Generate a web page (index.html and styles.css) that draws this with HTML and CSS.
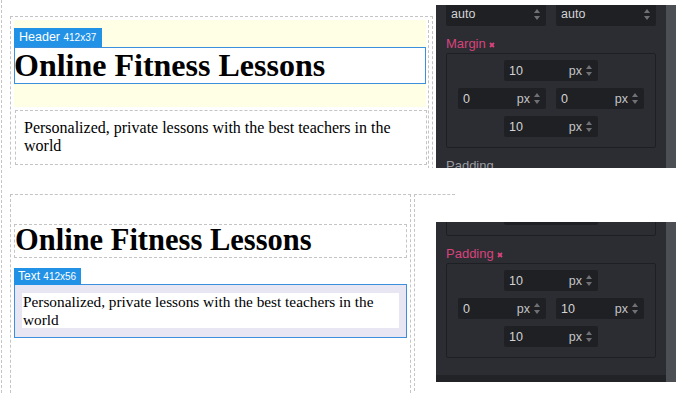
FILE: index.html
```html
<!DOCTYPE html>
<html>
<head>
    <meta charset="UTF-8">
    <meta name="viewport" content="width=device-width, initial-scale=1.0">
    <title>Box model editor</title>
    <link rel="stylesheet" href="styles.css">
</head>
<body>
    <div class="page">
        <div class="shot shot-top">
            <div class="canvas">
                <div class="frame">
                    <div class="frame-body">
                        <div class="hero">
                            <h1 class="title selected">
                                <span class="badge">Header <small>412x37</small></span>
                                Online Fitness Lessons
                            </h1>
                        </div>
                        <div class="text-box">
                            <p>Personalized, private lessons with the best teachers in the world</p>
                        </div>
                    </div>
                </div>
            </div>
            <div class="panel">
                <div class="panel-body">
                    <div class="panel-scroll">
                        <div class="selects">
                            <div class="field"><span class="val">auto</span><span class="spin"></span></div>
                            <div class="field"><span class="val">auto</span><span class="spin"></span></div>
                        </div>
                        <div class="prop-label">Margin <svg class="clear" width="6" height="6" viewBox="0 0 6 6"><path d="M1 1L5 5M5 1L1 5"/></svg></div>
                        <div class="box-model">
                            <div class="field num"><span class="val">10</span><span class="unit">px</span><span class="spin"></span></div>
                            <div class="pair">
                                <div class="field num"><span class="val">0</span><span class="unit">px</span><span class="spin"></span></div>
                                <div class="field num"><span class="val">0</span><span class="unit">px</span><span class="spin"></span></div>
                            </div>
                            <div class="field num"><span class="val">10</span><span class="unit">px</span><span class="spin"></span></div>
                        </div>
                        <div class="prop-label plain">Padding</div>
                    </div>
                </div>
                <div class="panel-strip"></div>
            </div>
        </div>

        <div class="shot shot-bottom">
            <div class="canvas">
                <div class="frame small">
                    <h1 class="title-sm">Online Fitness Lessons</h1>
                    <div class="text-sel">
                        <span class="badge">Text <small>412x56</small></span>
                        <p>Personalized, private lessons with the best teachers in the world</p>
                    </div>
                </div>
                <div class="side-col"></div>
            </div>
            <div class="panel panel-low">
                <div class="panel-body">
                    <div class="panel-scroll scrolled">
                        <div class="box-model">
                            <div class="field num"><span class="val">10</span><span class="unit">px</span><span class="spin"></span></div>
                            <div class="pair">
                                <div class="field num"><span class="val">0</span><span class="unit">px</span><span class="spin"></span></div>
                                <div class="field num"><span class="val">0</span><span class="unit">px</span><span class="spin"></span></div>
                            </div>
                            <div class="field num"><span class="val">10</span><span class="unit">px</span><span class="spin"></span></div>
                        </div>
                        <div class="prop-label">Padding <svg class="clear" width="6" height="6" viewBox="0 0 6 6"><path d="M1 1L5 5M5 1L1 5"/></svg></div>
                        <div class="box-model">
                            <div class="field num"><span class="val">10</span><span class="unit">px</span><span class="spin"></span></div>
                            <div class="pair">
                                <div class="field num"><span class="val">0</span><span class="unit">px</span><span class="spin"></span></div>
                                <div class="field num"><span class="val">10</span><span class="unit">px</span><span class="spin"></span></div>
                            </div>
                            <div class="field num"><span class="val">10</span><span class="unit">px</span><span class="spin"></span></div>
                        </div>
                        <div class="next-section"></div>
                    </div>
                </div>
                <div class="panel-strip"></div>
            </div>
        </div>
    </div>
</body>
</html>
```
FILE: styles.css
```css
body {
    margin: 0;
    background: #fff;
    font-family: "Liberation Serif", "Times New Roman", serif;
}
.page {
    height: 393px;
    margin-left: 1px;
    border-left: 1px dashed #c4c4c4;
    overflow: hidden;
}
.shot {
    display: flex;
    overflow: hidden;
}
.shot-top {
    height: 168px;
}
.shot-bottom {
    height: 213px;
    margin-top: 12px;
}
.canvas {
    width: 434px;
    flex-shrink: 0;
    padding-left: 8px;
    box-sizing: border-box;
    display: flex;
    align-items: flex-start;
}
.shot-top .canvas {
    padding-top: 16px;
}
.shot-bottom .canvas {
    padding-top: 14px;
}
.frame {
    flex-shrink: 0;
    width: 423px;
    height: 400px;
    box-sizing: border-box;
    border: 1px dashed #c4c4c4;
    padding: 3px 3px 0;
}
.frame-body {
    height: 100%;
    border-right: 1px dashed #c4c4c4;
    width: 415px;
    box-sizing: border-box;
}
.hero {
    width: 412px;
    background: #ffffe6;
    padding: 27px 0 23px;
}
.title {
    position: relative;
    margin: 0;
    font-size: 32px;
    line-height: 37px;
    height: 37px;
    white-space: nowrap;
    background: #fff;
    outline: 1px solid #3b8fdc;
    outline-offset: -1px;
}
.badge {
    position: absolute;
    left: 0;
    bottom: 100%;
    background: #2192e6;
    color: #fff;
    font: 12.5px/18px "Liberation Sans", Arial, sans-serif;
    font-weight: normal;
    padding: 0 6px 0 5px;
}
.badge small {
    font-size: 10px;
}
.text-box {
    margin: 3px 1px 0;
    height: 55px;
    box-sizing: border-box;
    border: 1px dashed #c4c4c4;
    padding: 8px 8px;
}
.text-box p {
    margin: 0;
    font-size: 16px;
    line-height: 18px;
}
.frame.small {
    width: 401px;
    padding: 0 3px;
}
.title-sm {
    margin: 29px 0 0;
    height: 34px;
    box-sizing: border-box;
    border: 1px dashed #c4c4c4;
    font-size: 30.5px;
    line-height: 31px;
    white-space: nowrap;
}
.text-sel {
    position: relative;
    margin-top: 26px;
    height: 54px;
    box-sizing: border-box;
    border: 1px solid #3b8fdc;
    background: #e9e6f4;
    padding: 8px 7px;
}
.text-sel .badge {
    left: -1px;
    line-height: 17px;
    font-size: 12px;
    padding: 0 5px 0 4px;
}
.text-sel p {
    margin: 0;
    background: #fff;
    height: 35px;
    padding-left: 1px;
    font-size: 15.3px;
    line-height: 17.5px;
}
.side-col {
    flex-shrink: 0;
    width: 40px;
    height: 400px;
    margin-left: 3px;
    border-top: 1px dashed #c4c4c4;
    border-left: 1px dashed #c4c4c4;
}

/* style panel */
.panel {
    display: flex;
    flex-shrink: 0;
    margin-top: 5px;
    height: 163px;
    font-family: "Liberation Sans", Arial, sans-serif;
}
.panel-low {
    margin-top: 42px;
    height: 160px;
}
.panel-body {
    width: 230px;
    background: #2b2d33;
    overflow: hidden;
}
.panel-strip {
    width: 10px;
    background: #4c4f54;
}
.panel-scroll {
    margin-top: -3px;
    padding: 0 10px;
}
.panel-scroll.scrolled {
    margin-top: -81px;
}
.selects {
    display: flex;
    gap: 10px;
}
.selects .field {
    width: 100px;
    height: 24px;
}
.field {
    display: flex;
    align-items: center;
    box-sizing: border-box;
    height: 21px;
    padding: 0 5px;
    background: #1f2024;
    border-radius: 2px;
    color: #d2d3d5;
    font-size: 12.5px;
}
.field .val {
    flex: 1;
}
.field .unit {
    color: #c4c5c8;
    margin-right: 4px;
}
.spin {
    width: 7px;
    height: 11px;
    position: relative;
}
.spin::before, .spin::after {
    content: "";
    position: absolute;
    left: 0;
    border-left: 3.5px solid transparent;
    border-right: 3.5px solid transparent;
}
.spin::before {
    top: 0;
    border-bottom: 4px solid #6f7175;
}
.spin::after {
    bottom: 0;
    border-top: 4px solid #6f7175;
}
.prop-label {
    margin-top: 10px;
    height: 15px;
    line-height: 15px;
    font-size: 13px;
    color: #d9437c;
    margin-bottom: 2px;
}
.prop-label.plain {
    color: #9a9ca0;
}
.clear {
    stroke: #d9437c;
    stroke-width: 1.8;
    vertical-align: 0;
}
.box-model {
    height: 95px;
    box-sizing: border-box;
    border: 1px solid #1e1f23;
    border-radius: 2px;
    padding: 6px 11px 10px;
    display: flex;
    flex-direction: column;
    align-items: center;
    gap: 7px;
}
.box-model > .field {
    width: 94px;
}
.pair {
    display: flex;
    gap: 10px;
    align-self: stretch;
}
.pair .field {
    flex: 1;
}
.next-section {
    margin: 17px -10px 0;
    height: 20px;
    background: #222327;
}
```
